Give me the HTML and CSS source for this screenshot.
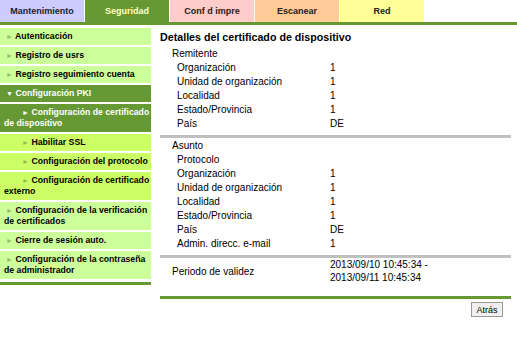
FILE: index.html
```html
<!DOCTYPE html>
<html lang="es">
<head>
<meta charset="UTF-8">
<title>Seguridad - Detalles del certificado de dispositivo</title>
<link rel="stylesheet" href="styles.css">
</head>
<body>
<div class="tabs">
  <div class="tab tab-maint">Mantenimiento</div>
  <div class="tab tab-sec active">Seguridad</div>
  <div class="tab tab-print">Conf d impre</div>
  <div class="tab tab-scan">Escanear</div>
  <div class="tab tab-net">Red</div>
</div>

<div class="layout">
  <div class="sidebar">
    <div class="menu">
      <div class="item"><span class="arrow">&#9658;</span> Autenticación</div>
      <div class="item"><span class="arrow">&#9658;</span> Registro de usrs</div>
      <div class="item"><span class="arrow">&#9658;</span> Registro seguimiento cuenta</div>
      <div class="item open"><span class="arrow">&#9660;</span> Configuración PKI</div>
      <div class="item open sub"><span class="arrow">&#9658;</span> Configuración de certificado de dispositivo</div>
      <div class="item child sub"><span class="arrow">&#9658;</span> Habilitar SSL</div>
      <div class="item child sub"><span class="arrow">&#9658;</span> Configuración del protocolo</div>
      <div class="item child sub"><span class="arrow">&#9658;</span> Configuración de certificado externo</div>
      <div class="item"><span class="arrow">&#9658;</span> Configuración de la verificación de certificados</div>
      <div class="item"><span class="arrow">&#9658;</span> Cierre de sesión auto.</div>
      <div class="item"><span class="arrow">&#9658;</span> Configuración de la contraseña de administrador</div>
    </div>
    <div class="rule"></div>
  </div>

  <div class="main">
    <h1 class="title">Detalles del certificado de dispositivo</h1>

    <div class="group">
      <div class="row head"><span>Remitente</span><span></span></div>
      <div class="row"><span>Organización</span><span>1</span></div>
      <div class="row"><span>Unidad de organización</span><span>1</span></div>
      <div class="row"><span>Localidad</span><span>1</span></div>
      <div class="row"><span>Estado/Provincia</span><span>1</span></div>
      <div class="row"><span>País</span><span>DE</span></div>
    </div>
    <div class="sep"></div>

    <div class="group">
      <div class="row head"><span>Asunto</span><span></span></div>
      <div class="row"><span>Protocolo</span><span></span></div>
      <div class="row"><span>Organización</span><span>1</span></div>
      <div class="row"><span>Unidad de organización</span><span>1</span></div>
      <div class="row"><span>Localidad</span><span>1</span></div>
      <div class="row"><span>Estado/Provincia</span><span>1</span></div>
      <div class="row"><span>País</span><span>DE</span></div>
      <div class="row"><span>Admin. direcc. e-mail</span><span>1</span></div>
    </div>
    <div class="sep"></div>

    <div class="row validity">
      <span>Periodo de validez</span>
      <span>2013/09/10 10:45:34 -<br>2013/09/11 10:45:34</span>
    </div>
    <div class="bottom"></div>

    <div class="actions">
      <button class="btn" type="button">Atrás</button>
    </div>
  </div>
</div>
</body>
</html>
```

FILE: styles.css
```css
body {
  margin: 0;
  background: #fff;
  font-family: "Liberation Sans", Arial, sans-serif;
  color: #000;
}
.tabs {
  display: flex;
  gap: 1px;
  height: 22px;
  border-bottom: 3px solid #669933;
}
.tab {
  width: 84px;
  display: flex;
  align-items: center;
  justify-content: center;
  font-size: 9px;
  font-weight: bold;
  color: #222;
}
.tab-maint { background: #ccccff; }
.tab-sec { background: #669933; color: #ffffcc; }
.tab-print { background: #ffcccc; }
.tab-scan { background: #ffcc99; }
.tab-net { background: #ffff99; }

.layout {
  display: flex;
  margin-top: 3px;
}
.sidebar {
  width: 151px;
  flex: none;
}
.menu {
  display: flex;
  flex-direction: column;
  gap: 2px;
}
.item {
  background: #ccff99;
  font-size: 8.7px;
  font-weight: bold;
  line-height: 11px;
  padding: 3px 0 3px 4px;
  text-indent: 2px;
}
.item .arrow {
  display: inline-block;
  width: 7px;
  text-indent: 0;
  color: #99bb66;
  font-size: 7px;
}
.item.open {
  background: #669933;
  color: #fff;
}
.item.open .arrow { color: #fff; }
.item.sub { text-indent: 18px; }
.item.child { background: #ccff66; }
.item.child .arrow { color: #99bb55; }
.rule {
  margin-top: 3px;
  height: 3px;
  background: #669933;
}

.main {
  margin-left: 9px;
  width: 351px;
  font-size: 10px;
}
.title {
  margin: 1px 0 2px;
  font-size: 10.7px;
  font-weight: bold;
  line-height: 16px;
}
.row {
  display: grid;
  grid-template-columns: 170px 1fr;
  line-height: 14px;
}
.row > span:first-child { padding-left: 17px; }
.row.head > span:first-child { padding-left: 12px; }
.sep {
  height: 3px;
  background: #c0c0c0;
  margin: 4px 0 1px;
}
.validity {
  align-items: center;
  line-height: 13px;
  margin-top: -1px;
}
.validity > span:first-child { padding-left: 12px; }
.bottom {
  height: 3px;
  background: #669933;
  margin-top: 12px;
}
.actions {
  display: flex;
  justify-content: flex-end;
  padding: 3px 8px 0 0;
}
.btn {
  font-family: "Liberation Sans", Arial, sans-serif;
  font-size: 9px;
  height: 15px;
  width: 32px;
  padding: 0;
  background: #f0f0f0;
  border: 1px solid #999;
  color: #000;
}
```
